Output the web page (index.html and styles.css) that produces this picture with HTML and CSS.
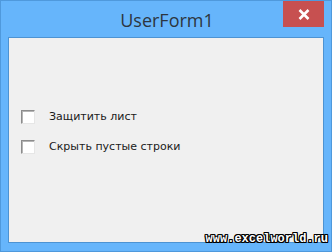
FILE: index.html
```html
<!DOCTYPE html>
<html lang="ru">
<head>
    <meta charset="UTF-8">
    <title>UserForm1</title>
    <link rel="stylesheet" href="styles.css">
</head>
<body>
    <div class="window">
        <div class="titlebar">
            <span class="title">UserForm1</span>
            <button class="close" aria-label="Закрыть">
                <svg width="12" height="11" viewBox="0 0 12 11">
                    <path d="M1.5 1 L10.5 10 M10.5 1 L1.5 10" stroke="#fff" stroke-width="2.6" fill="none"/>
                </svg>
            </button>
        </div>
        <div class="client">
            <label class="check">
                <span class="box"></span>
                <span class="text">Защитить лист</span>
            </label>
            <label class="check">
                <span class="box"></span>
                <span class="text">Скрыть пустые строки</span>
            </label>
        </div>
    </div>
    <div class="watermark">www.excelworld.ru</div>
</body>
</html>
```

FILE: styles.css
```css
body {
    margin: 0;
    width: 332px;
    height: 252px;
    overflow: hidden;
    position: relative;
    font-family: "DejaVu Sans", sans-serif;
}
.window {
    box-sizing: border-box;
    width: 332px;
    height: 252px;
    background: #66b5fb;
    border: 1px solid #4f99dc;
    padding: 0 7px 8px 7px;
    display: flex;
    flex-direction: column;
}
.titlebar {
    height: 36px;
    display: flex;
    justify-content: center;
    position: relative;
}
.title {
    font-family: "Open Sans", sans-serif;
    font-size: 18px;
    color: #2d3640;
    line-height: 38px;
    margin-left: 2px;
}
.close {
    position: absolute;
    right: 0;
    top: 0;
    width: 41px;
    height: 26px;
    border: none;
    padding: 0;
    background: #c75050;
    display: flex;
    align-items: center;
    justify-content: center;
}
.client {
    flex: 1;
    background: #f0f0f0;
    border: 1px solid #4d93d2;
    padding: 72px 0 0 12px;
    display: flex;
    flex-direction: column;
    gap: 17px;
}
.check {
    display: flex;
    align-items: center;
    height: 13px;
}
.box {
    box-sizing: border-box;
    width: 14px;
    height: 14px;
    background: #fff;
    border: 1px solid;
    border-color: #8c8c8c #e6e6e6 #e6e6e6 #8c8c8c;
    box-shadow: inset 1px 1px 0 #b5b5b5;
}
.text {
    margin-left: 14px;
    font-size: 11px;
    color: #1a1a1a;
}
.watermark {
    position: absolute;
    right: 4px;
    bottom: 6px;
    font-family: "Liberation Mono", monospace;
    font-weight: bold;
    font-size: 12px;
    color: #fff;
    text-shadow: 1px 0 0 #000, -1px 0 0 #000, 0 1px 0 #000, 0 -1px 0 #000,
        1px 1px 0 #000, -1px -1px 0 #000, 1px -1px 0 #000, -1px 1px 0 #000;
}
```
